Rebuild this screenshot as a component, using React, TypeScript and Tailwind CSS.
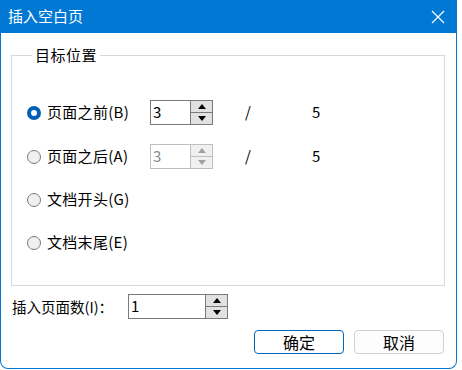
import React from 'react'

const FONT = { fontFamily: '"Noto Sans CJK SC", "Noto Sans", sans-serif' }

function Radio({ checked, label }: { checked?: boolean; label: string }) {
  return (
    <div className="flex items-center gap-[6px]">
      {checked ? (
        <span className="w-[14px] h-[14px] rounded-full border-[4px] border-[#005fb8] bg-white" />
      ) : (
        <span className="w-[14px] h-[14px] rounded-full border border-[#7a7a7a] bg-[#f0f0f0]" />
      )}
      <span className="text-[15px] tracking-[0.3px] text-black">{label}</span>
    </div>
  )
}

function Spin({ value, disabled, width }: { value: string; disabled?: boolean; width: number }) {
  const border = disabled ? 'border-[#bfbfbf]' : 'border-[#7a7a7a]'
  const arrow = disabled ? 'text-[#a0a0a0]' : 'text-black'
  const bg = disabled ? 'bg-[#f0f0f0]' : 'bg-[#e1e1e1]'
  return (
    <div className={`flex h-[25px] border ${border} bg-white`} style={{ width }}>
      <div className={`flex-1 flex items-center pl-[2px] text-[15px] ${disabled ? 'text-[#8a8a8a]' : 'text-black'}`}>
        {value}
      </div>
      <div className={`w-[22px] flex flex-col border-l ${border}`}>
        <div className={`flex-1 flex items-center justify-center ${bg} border-b ${border} ${arrow}`}>
          <svg width="8" height="5" viewBox="0 0 8 5"><path d="M0 5 L4 0 L8 5 Z" fill="currentColor" /></svg>
        </div>
        <div className={`flex-1 flex items-center justify-center ${bg} ${arrow}`}>
          <svg width="8" height="5" viewBox="0 0 8 5"><path d="M0 0 L8 0 L4 5 Z" fill="currentColor" /></svg>
        </div>
      </div>
    </div>
  )
}

export default function App() {
  return (
    <div className="w-[462px] h-[370px] bg-white" style={FONT}>
      <div className="w-[457px] h-[369px] flex flex-col border-r border-b border-l border-[#0078d4] rounded-b-[8px] overflow-hidden bg-white">
        {/* Title bar */}
        <div className="h-[33px] bg-[#0078d4] flex items-center justify-between pl-[7px] pr-[10px] text-white">
          <span className="text-[15px]">插入空白页</span>
          <svg width="14" height="14" viewBox="0 0 14 14" className="mr-[1px]">
            <path d="M1 1 L13 13 M13 1 L1 13" stroke="white" strokeWidth="1.2" />
          </svg>
        </div>

        <div className="flex-1 flex flex-col pl-[10px] pr-[11px]">
          {/* Group box */}
          <fieldset className="mt-[13px] h-[240px] border border-[#d9d9d9] pl-[15px] pr-2 pb-0 m-0">
            <legend className="ml-[5px] px-[3px] text-[15px] tracking-[0.5px] text-black leading-[18px]">目标位置</legend>
            <div className="flex flex-col mt-[36px]">
              <div className="flex items-center h-[25px]">
                <div className="w-[123px]"><Radio checked label="页面之前(B)" /></div>
                <Spin value="3" width={63} />
                <span className="ml-[32px] text-[15px]">/</span>
                <span className="ml-[61px] text-[15px]">5</span>
              </div>
              <div className="flex items-center h-[25px] mt-[19px]">
                <div className="w-[123px]"><Radio label="页面之后(A)" /></div>
                <Spin value="3" width={63} disabled />
                <span className="ml-[32px] text-[15px]">/</span>
                <span className="ml-[61px] text-[15px]">5</span>
              </div>
              <div className="flex items-center h-[25px] mt-[18px]">
                <Radio label="文档开头(G)" />
              </div>
              <div className="flex items-center h-[25px] mt-[18px]">
                <Radio label="文档末尾(E)" />
              </div>
            </div>
          </fieldset>

          {/* Page count */}
          <div className="flex items-center mt-[8px] h-[25px]">
            <span className="w-[117px] pl-[1px] text-[14.5px]">插入页面数(I)：</span>
            <Spin value="1" width={100} />
          </div>

          {/* Buttons */}
          <div className="flex justify-end gap-[10px] mt-[11px] pr-[1px]">
            <button className="w-[90px] h-[24px] rounded-[4px] border border-[#0067c0] bg-white text-[16px] text-black leading-none">
              确定
            </button>
            <button className="w-[90px] h-[24px] rounded-[4px] border border-[#d0d0d0] bg-[#fdfdfd] text-[16px] text-black leading-none">
              取消
            </button>
          </div>
        </div>
      </div>
    </div>
  )
}
